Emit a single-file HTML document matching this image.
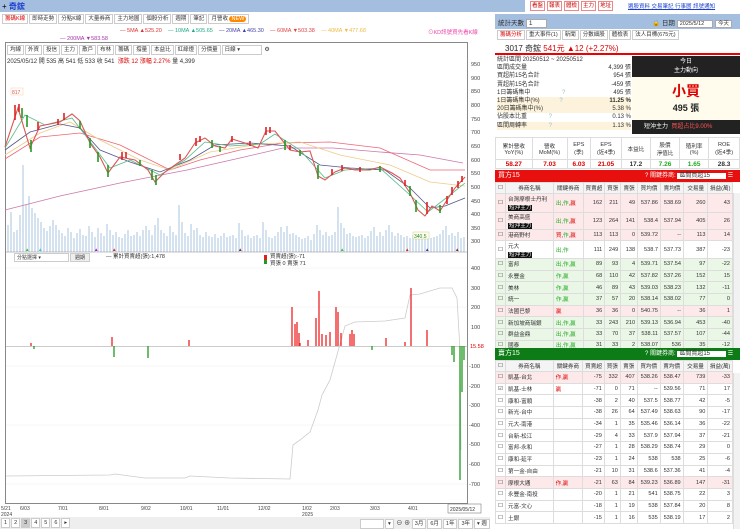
<!DOCTYPE html>
<html><head><meta charset="utf-8">
<style>
*{margin:0;padding:0;box-sizing:border-box}
body{width:740px;height:529px;overflow:hidden;background:#fff;font-family:"Liberation Sans","Noto Sans CJK TC",sans-serif;font-size:6px;color:#333;position:relative}
.a{position:absolute;white-space:nowrap}
.tab{display:inline-block;border:1px solid #ccc;padding:0 2px;height:10px;line-height:9px;margin-right:1px;font-size:5.5px;background:#fff}
.btn{display:inline-block;border:1px solid #e88;color:#c00;padding:0 1px;margin-right:2px;height:10px;line-height:9px;background:#fff;font-size:5.5px}
table{border-collapse:collapse;font-size:5.6px;position:absolute}
td{border:1px solid #ddd;padding:0 2px;text-align:right;white-space:nowrap;overflow:hidden}
td.l{text-align:left}
tr.p td{background:#fde9ea}
tr.g td{background:#eaf7e6}
tr.w td{background:#fff}
th{border:1px solid #ddd;background:#f4f4f4;font-weight:normal;font-size:5.6px;height:11px}
.bk{background:#111;color:#fff;padding:0 1px;font-size:5.6px}
.r{color:#d00}.gr{color:#2a2}
</style></head><body>

<div class="a" style="left:0;top:0;width:525px;height:12px;background:#a4bedf"></div>
<div class="a" style="left:2px;top:1px;font-size:8px;color:#000">+ <span style="color:#1a3fd0;font-weight:bold">奇鋐</span></div>
<div class="a" style="left:530px;top:1px"><span class="btn">看盤</span><span class="btn">報表</span><span class="btn">體檢</span><span class="btn">主力</span><span class="btn">地址</span></div>
<div class="a" style="left:628px;top:2px;color:#1a3fd0;text-decoration:underline;font-size:5.5px">選股資料 交易筆記 行事曆 訊號通知</div>

<div class="a" style="left:2px;top:14px"><span class="tab" style="color:#d00">籌碼K線</span><span class="tab">即時走勢</span><span class="tab">分點K線</span><span class="tab">大量券商</span><span class="tab">主力地圖</span><span class="tab">個股分析</span><span class="tab">週期</span><span class="tab">筆記</span><span class="tab">月營收 <span style="background:#f80;color:#fff;border-radius:4px;padding:0 2px">NEW</span></span></div>

<div class="a" style="left:120px;top:28px;font-size:5.5px"><span style="color:#d33">— 5MA ▲525.20</span>&nbsp;&nbsp;&nbsp;&nbsp;<span style="color:#2a8">— 10MA ▲505.65</span>&nbsp;&nbsp;&nbsp;&nbsp;<span style="color:#44a">— 20MA ▲465.30</span>&nbsp;&nbsp;&nbsp;&nbsp;<span style="color:#d44">— 60MA ▼503.38</span>&nbsp;&nbsp;&nbsp;&nbsp;<span style="color:#eb4">— 40MA ▼477.68</span></div>
<div class="a" style="left:60px;top:36px;font-size:5.5px;color:#a3a">— 200MA ▼583.58</div>
<div class="a" style="left:428px;top:28px;font-size:5.5px;color:#e4a">⊙KD訊號買先看K線</div>

<div class="a" style="left:5px;top:42px;width:463px;height:462px;border:1px solid #888"></div>
<div class="a" style="left:7px;top:45px"><span class="tab">均線</span><span class="tab">外資</span><span class="tab">投信</span><span class="tab">主力</span><span class="tab">散戶</span><span class="tab">布林</span><span class="tab">籌碼</span><span class="tab">撐量</span><span class="tab">本益比</span><span class="tab">紅綠燈</span><span class="tab">分價量</span><span class="tab" style="width:40px">日線 ▾</span> ⚙</div>
<div class="a" style="left:7px;top:56px;font-size:6px">2025/05/12 開 535 高 541 低 533 收 541 &nbsp;<span class="r">漲跌 12 漲幅 2.27%</span> 量 4,399</div>

<svg class="a" style="left:0;top:0" width="490" height="529">
<g font-size="5.5" fill="#444" font-family="Liberation Sans">
<text x="471" y="66">950</text><text x="471" y="80">900</text><text x="471" y="93">850</text><text x="471" y="107">800</text><text x="471" y="121">750</text><text x="471" y="134">700</text><text x="471" y="148">650</text><text x="471" y="162">600</text><text x="471" y="175">550</text><text x="471" y="189">500</text><text x="471" y="203">450</text><text x="471" y="216">400</text><text x="471" y="230">350</text><text x="471" y="243">300</text>
<text x="471" y="270">400</text><text x="471" y="290">300</text><text x="471" y="309">200</text><text x="471" y="329">100</text><text x="470" y="348" fill="#d00">15.58</text><text x="469" y="368">-100</text><text x="469" y="388">-200</text><text x="469" y="407">-300</text><text x="469" y="427">-400</text><text x="469" y="446">-500</text><text x="469" y="466">-600</text><text x="469" y="486">-700</text>
</g>
<g stroke="#b8cde2" stroke-width="1.2">
<path d="M8 252V225M11 252V212M14 252V232M17 252V230M20 252V215M23 252V165M26 252V205M29 252V196M32 252V208M35 252V213M38 252V218M41 252V222M44 252V228M47 252V231M50 252V226M53 252V220M56 252V225M59 252V230M62 252V233M65 252V236M68 252V228M71 252V232M74 252V238M77 252V233M80 252V229M83 252V235M86 252V236M89 252V226M92 252V232M95 252V237M98 252V228M101 252V233M104 252V236M107 252V224M110 252V230M113 252V235M116 252V232M119 252V237M122 252V238M125 252V234M128 252V230M131 252V236M134 252V235M137 252V232M140 252V236M143 252V230M146 252V226M149 252V230M152 252V235M155 252V225M158 252V218M161 252V230M164 252V233M167 252V236M170 252V226M173 252V232M176 252V235M179 252V205M182 252V222M185 252V233M188 252V236M191 252V224M194 252V230M197 252V228M200 252V235M203 252V237M206 252V232M209 252V236M212 252V237M215 252V234M218 252V238M221 252V236M224 252V233M227 252V237M230 252V236M233 252V235M236 252V238M239 252V223M242 252V230M245 252V236M248 252V235M251 252V238M254 252V236M257 252V235M260 252V238M263 252V222M266 252V230M269 252V237M272 252V238M275 252V236M278 252V232M281 252V227M284 252V232M287 252V226M290 252V234M293 252V233M296 252V235M299 252V237M302 252V239M305 252V238M308 252V236M311 252V240M314 252V234M317 252V225M320 252V230M323 252V235M326 252V232M329 252V236M332 252V235M335 252V232M338 252V207M341 252V223M344 252V228M347 252V234M350 252V233M353 252V236M356 252V237M359 252V236M362 252V235M365 252V238M368 252V236M371 252V231M374 252V227M377 252V236M380 252V232M383 252V236M386 252V230M389 252V225M392 252V232M395 252V236M398 252V233M401 252V235M404 252V237M407 252V236M410 252V238M413 252V235M416 252V232M419 252V238M422 252V236M425 252V232M428 252V235M431 252V238M434 252V237M437 252V236M440 252V234M443 252V230M446 252V226M449 252V235M452 252V233M455 252V236M458 252V232M461 252V238M464 252V237"/>
</g>
<g fill="none" stroke-width="0.8">
<polyline stroke="#c7a" points="5,210 60,196 120,183 187,170 240,158 283,148 333,148 380,152 420,155 463,163"/>
<polyline stroke="#e67" points="5,159 40,137 80,133 120,145 170,170 200,160 240,150 283,143 330,142 380,148 430,170 465,170"/>
<polyline stroke="#ec8" points="5,155 40,133 70,122 100,140 140,160 170,170 210,152 260,144 300,142 340,155 390,165 430,182 465,186"/>
<polyline stroke="#558" points="5,150 30,132 60,124 80,128 100,150 130,162 160,172 190,160 215,145 250,143 290,146 320,165 350,168 385,170 410,188 430,208 445,206 465,198"/>
<polyline stroke="#5b8" points="5,148 25,115 45,125 72,118 95,148 110,168 130,160 160,175 185,160 205,142 230,146 260,144 275,134 300,150 325,178 345,170 380,168 410,195 428,212 450,195 465,183"/>
<polyline stroke="#d55" stroke-width="1.1" points="5,147 18,108 30,148 40,126 60,122 72,114 80,121 90,143 100,157 108,173 120,157 135,160 148,170 155,182 165,172 175,165 185,158 195,143 205,138 215,146 225,148 232,139 245,143 258,148 266,131 275,131 282,140 290,150 300,152 310,151 318,176 325,180 335,172 345,168 355,170 370,170 380,167 392,173 400,178 410,193 418,210 425,216 432,206 440,211 447,200 455,188 465,177"/>
</g>
<g stroke-width="1.6">
<path stroke="#d22" d="M15 120v-15M19 112v-8M38 130v-8M58 125v-6M64 120v-7M122 160v-8M126 158v-6M196 146v-8M200 142v-6M232 142v-6M266 135v-8M270 133v-6M332 175v-6M342 171v-6M405 186v-6M427 214v-12M447 204v-8M452 195v-8M458 188v-7M462 182v-6M180 160v-6M250 146v-5M290 150v-5M360 172v-5"/>
<path stroke="#292" d="M22 108v10M27 115v12M31 140v12M90 138v10M98 152v10M108 165v12M152 170v10M156 175v10M212 140v8M285 140v10M318 165v14M410 186v10M416 200v12M440 205v8M80 121v8M140 160v6M220 146v6M300 150v6M380 166v6"/>
</g>
<rect x="11" y="88" width="12" height="7" fill="#fff" stroke="#fc9" stroke-width=".5"/><text x="12" y="94" font-size="5" fill="#d55">817</text>
<rect x="413" y="232" width="16" height="7" fill="#ffe" stroke="#cc9" stroke-width=".5"/><text x="414" y="238" font-size="5" fill="#282">340.5</text>
<line x1="6" y1="252" x2="467" y2="252" stroke="#888" stroke-width=".6"/>
<g font-size="4.5"><text x="25" y="251" fill="#2c2">▲</text><text x="112" y="251" fill="#d22">▲</text><text x="94" y="251" fill="#c0c">▲</text><text x="238" y="251" fill="#822">▲</text><text x="340" y="251" fill="#2c2">▲</text><text x="405" y="251" fill="#d22">▲</text><text x="425" y="251" fill="#33a">▲</text><text x="455" y="251" fill="#822">▲</text><text x="38" y="251" fill="#2cc">▲</text></g>
<g stroke="#eee" stroke-width=".5"><path d="M6 268H467M6 307H467M6 366H467M6 425H467M6 484H467"/></g>
<line x1="6" y1="346.5" x2="467" y2="346.5" stroke="#999" stroke-width=".5"/>
<polyline fill="none" stroke="#ccc" stroke-width=".8" points="6,476 110,475 115,474 145,478 185,478 190,476 230,478 290,479 293,445 300,440 310,432 318,410 322,395 330,380 337,355 345,326 355,322 385,321 405,318 410,295 420,294 440,288 452,288 457,298 460,350 461,450"/>
<g stroke="#e22" stroke-width="1.3"><path d="M31 346V343M112 346V337M189 346V340M292 346V307M295 346V324M297 346V322M299 346V333M300 346V343M308 346V340M316 346V318M319 346V291M322 346V334M326 346V335M330 346V332M336 346V307M338 346V312M341 346V333M350 346V334M352 346V330M354 346V334M386 346V338M405 346V342M411 346V288M427 346V330"/></g>
<g stroke="#292" stroke-width="1.3"><path d="M34 346V349M114 346V357M148 346V358M372 346V350M452 346V355M454 346V362M460 346V480M462 346V392M464 346V360"/></g>
<g font-size="5.5" fill="#333"><text x="106" y="258">— 累計買賣超(張):1,478</text><rect x="264" y="255" width="3" height="5" fill="#d22"/><rect x="264" y="260" width="3" height="4" fill="#292"/><text x="270" y="258">買賣超(張):-71</text><text x="270" y="265">買張 0 賣張 71</text></g>
<g font-size="5" fill="#444"><text x="1" y="510">5/21</text><text x="1" y="516">2024</text><text x="20" y="510">6/03</text><text x="58" y="510">7/01</text><text x="99" y="510">8/01</text><text x="141" y="510">9/02</text><text x="180" y="510">10/01</text><text x="217" y="510">11/01</text><text x="258" y="510">12/02</text><text x="302" y="510">1/02</text><text x="302" y="516">2025</text><text x="330" y="510">2/03</text><text x="370" y="510">3/03</text><text x="408" y="510">4/01</text></g>
<rect x="448" y="504" width="33" height="9" fill="#fff" stroke="#666" stroke-width=".5"/><text x="450" y="511" font-size="5" fill="#333">2025/05/12</text>
</svg>
<div class="a" style="left:14px;top:253px;width:55px;height:9px;border:1px solid #ccc;font-size:5px;padding-left:2px;background:#fff">分點選擇 ▾</div>
<div class="a" style="left:70px;top:253px;width:20px;height:9px;border:1px solid #ccc;background:#eee;font-size:5px;text-align:center">週期</div>

<div class="a" style="left:0;top:517px;width:490px;height:12px;background:#eee"></div>
<div class="a" style="left:1px;top:518px;font-size:6px"><span class="tab">1</span><span class="tab">2</span><span class="tab" style="background:#ccc">3</span><span class="tab">4</span><span class="tab">5</span><span class="tab">6</span><span class="tab">▸</span></div>
<div class="a" style="left:360px;top:518px;font-size:6px"><span class="tab" style="width:24px">&nbsp;</span><span class="tab">▾</span> ⊖ ⊕ <span class="tab">3月</span><span class="tab">6月</span><span class="tab">1年</span><span class="tab">3年</span><span class="tab">▾ 週</span></div>

<div class="a" style="left:495px;top:14px;width:245px;height:15px;background:#a4bedf"></div>
<div class="a" style="left:498px;top:17px;font-size:6.5px">統計天數 <span style="background:#fff;border:1px solid #aaa;padding:0 14px 0 2px">1</span></div>
<div class="a" style="left:652px;top:17px;font-size:6.5px">🔒 日期 <span style="background:#fff;border:1px solid #aaa;padding:0 8px 0 2px;font-size:5.5px">2025/5/12</span> <span style="background:#fff;border:1px solid #aaa;padding:0 2px;font-size:5.5px">今天</span></div>
<div class="a" style="left:497px;top:30px"><span class="tab" style="color:#d00">籌碼分析</span><span class="tab">重大事件(1)</span><span class="tab">新聞</span><span class="tab">分數細股</span><span class="tab">體檢表</span><span class="tab">法人目標(675元)</span></div>
<div class="a" style="left:495px;top:41px;width:245px;height:14px;border-bottom:2px solid #e00"></div>
<div class="a" style="left:505px;top:43px;font-size:8px;color:#222">3017 奇鋐 <span class="r">541元 ▲12 (+2.27%)</span></div>

<div class="a" style="left:497px;top:56px;width:134px;font-size:6px;line-height:8.2px">
<div style="display:flex;justify-content:space-between"><span>統計區間 20250512 ~ 20250512</span></div>
<div style="display:flex;justify-content:space-between"><span>區間成交量</span><span>4,399 張</span></div>
<div style="display:flex;justify-content:space-between"><span>買超前15名合計</span><span>954 張</span></div>
<div style="display:flex;justify-content:space-between"><span>賣超前15名合計</span><span>-459 張</span></div>
<div style="display:flex;justify-content:space-between"><span>1日籌碼集中 <span style="color:#9bc;margin-left:30px">?</span></span><span>495 張</span></div>
<div style="display:flex;justify-content:space-between;background:#fdf3dc"><span>1日籌碼集中(%) <span style="color:#9bc;margin-left:18px">?</span></span><span style="font-weight:bold">11.25 %</span></div>
<div style="display:flex;justify-content:space-between;background:#fdf3dc"><span>20日籌碼集中(%)</span><span>5.38 %</span></div>
<div style="display:flex;justify-content:space-between"><span>佔股本比重 <span style="color:#9bc;margin-left:20px">?</span></span><span>0.13 %</span></div>
<div style="display:flex;justify-content:space-between;background:#fdf3dc"><span>區間周轉率 <span style="color:#9bc;margin-left:20px">?</span></span><span>1.13 %</span></div>
</div>
<div class="a" style="left:632px;top:56px;width:108px;height:21px;background:#222;color:#fff;text-align:center;font-size:6px;line-height:9px;padding-top:2px">今日<br>主力動向</div>
<div class="a" style="left:632px;top:77px;width:108px;height:43px;background:#fffcee;text-align:center"><div style="color:#d00;font-size:14px;margin-top:4px;font-weight:bold">小買</div><div style="font-size:9px;font-weight:bold;color:#222">495 張</div></div>
<div class="a" style="left:632px;top:120px;width:108px;height:14px;background:#222;color:#fff;font-size:6px;line-height:14px;padding-left:12px">短沖主力 &nbsp;<span style="color:#f55">買超占比9.00%</span></div>

<table style="left:495px;top:137px;width:245px;height:32px">
<tr style="height:22px;color:#333"><td style="text-align:center">累計營收<br>YoY(%)</td><td style="text-align:center">營收<br>MoM(%)</td><td style="text-align:center">EPS<br>(季)</td><td style="text-align:center">EPS<br>(近4季)</td><td style="text-align:center">本益比</td><td style="text-align:center">股價<br>淨值比</td><td style="text-align:center">殖利率<br>(%)</td><td style="text-align:center">ROE<br>(近4季)</td></tr>
<tr style="font-weight:bold;font-size:6.5px"><td class="r" style="text-align:center">58.27</td><td class="r" style="text-align:center">7.03</td><td class="r" style="text-align:center">6.03</td><td class="r" style="text-align:center">21.05</td><td style="text-align:center">17.2</td><td class="gr" style="text-align:center">7.26</td><td class="gr" style="text-align:center">1.65</td><td style="text-align:center">28.3</td></tr>
</table>

<div class="a" style="left:495px;top:170px;width:245px;height:12px;background:#e8100e;color:#fff;font-size:7px;line-height:12px;padding-left:3px">買方15<span style="position:absolute;left:150px;font-size:6px">? 關鍵券商: <span style="background:#fff;color:#333;padding:0 16px 0 2px">區間買超15</span> ☰</span></div>
<table style="left:495px;top:182px;width:238px">
<colgroup><col style="width:9px"><col style="width:48px"><col style="width:30px"><col style="width:22px"><col style="width:16px"><col style="width:17px"><col style="width:23px"><col style="width:23px"><col style="width:25px"><col style="width:25px"></colgroup>
<tr><th>☐</th><th>券商名稱</th><th>關鍵券商</th><th>買賣超</th><th>買張</th><th>賣張</th><th>買均價</th><th>賣均價</th><th>交易量</th><th>損益(萬)</th></tr>
<tr class="p" style="height:19px"><td>☐</td><td class="l">台灣摩根士丹利<br><span class="bk">短沖主力</span></td><td class="l"><span class="gr">出</span>,<span class="gr">作</span>,<span class="r">贏</span></td><td>162</td><td>211</td><td>49</td><td>537.86</td><td>538.69</td><td>260</td><td>43</td></tr>
<tr class="p" style="height:17px"><td>☐</td><td class="l">美商高盛<br><span class="bk">短沖主力</span></td><td class="l"><span class="gr">出,作</span>,<span class="r">贏</span></td><td>123</td><td>264</td><td>141</td><td>538.4</td><td>537.94</td><td>405</td><td>26</td></tr>
<tr class="p" style="height:11px"><td>☐</td><td class="l">港商野村</td><td class="l"><span class="r">買</span>,<span class="gr">作</span>,<span class="r">贏</span></td><td>113</td><td>113</td><td>0</td><td>539.72</td><td>--</td><td>113</td><td>14</td></tr>
<tr class="w" style="height:18px"><td>☐</td><td class="l">元大<br><span class="bk">短沖主力</span></td><td class="l gr">出,作</td><td>111</td><td>249</td><td>138</td><td>538.7</td><td>537.73</td><td>387</td><td>-23</td></tr>
<tr class="g" style="height:11.7px"><td>☐</td><td class="l">富邦</td><td class="l gr">出,作,贏</td><td>89</td><td>93</td><td>4</td><td>539.71</td><td>537.54</td><td>97</td><td>-22</td></tr>
<tr class="g" style="height:11.7px"><td>☐</td><td class="l">永豐金</td><td class="l gr">作,贏</td><td>68</td><td>110</td><td>42</td><td>537.82</td><td>537.26</td><td>152</td><td>15</td></tr>
<tr class="g" style="height:11.7px"><td>☐</td><td class="l">美林</td><td class="l gr">作,贏</td><td>46</td><td>89</td><td>43</td><td>539.03</td><td>538.23</td><td>132</td><td>-11</td></tr>
<tr class="g" style="height:11.7px"><td>☐</td><td class="l">統一</td><td class="l gr">作,贏</td><td>37</td><td>57</td><td>20</td><td>538.14</td><td>538.02</td><td>77</td><td>0</td></tr>
<tr class="p" style="height:11.7px"><td>☐</td><td class="l">法國巴黎</td><td class="l r">贏</td><td>36</td><td>36</td><td>0</td><td>540.75</td><td>--</td><td>36</td><td>1</td></tr>
<tr class="g" style="height:11.7px"><td>☐</td><td class="l">新加坡商瑞銀</td><td class="l gr">出,作,贏</td><td>33</td><td>243</td><td>210</td><td>539.13</td><td>536.94</td><td>453</td><td>-40</td></tr>
<tr class="g" style="height:11.7px"><td>☐</td><td class="l">群益金鼎</td><td class="l gr">出,作,贏</td><td>33</td><td>70</td><td>37</td><td>538.11</td><td>537.57</td><td>107</td><td>-44</td></tr>
<tr class="g" style="height:8px"><td>☐</td><td class="l">國泰</td><td class="l gr">出,作,贏</td><td>31</td><td>33</td><td>2</td><td>538.07</td><td>536</td><td>35</td><td>-12</td></tr>
</table>

<div class="a" style="left:495px;top:348px;width:245px;height:12px;background:#0e7c16;color:#fff;font-size:7px;line-height:12px;padding-left:3px">賣方15<span style="position:absolute;left:150px;font-size:6px">? 關鍵券商: <span style="background:#fff;color:#333;padding:0 16px 0 2px">區間賣超15</span> ☰</span></div>
<table style="left:495px;top:360px;width:238px">
<colgroup><col style="width:9px"><col style="width:48px"><col style="width:30px"><col style="width:22px"><col style="width:16px"><col style="width:17px"><col style="width:23px"><col style="width:23px"><col style="width:25px"><col style="width:25px"></colgroup>
<tr><th>☐</th><th>券商名稱</th><th>關鍵券商</th><th>買賣超</th><th>買張</th><th>賣張</th><th>買均價</th><th>賣均價</th><th>交易量</th><th>損益(萬)</th></tr>
<tr class="p" style="height:11.7px"><td>☐</td><td class="l">凱基-台北</td><td class="l r">作,贏</td><td>-75</td><td>332</td><td>407</td><td>538.26</td><td>538.47</td><td>739</td><td>-33</td></tr>
<tr class="w" style="height:11.7px"><td>☑</td><td class="l">凱基-士林</td><td class="l r">贏</td><td>-71</td><td>0</td><td>71</td><td>--</td><td>539.56</td><td>71</td><td>17</td></tr>
<tr class="w" style="height:11.7px"><td>☐</td><td class="l">康和-富順</td><td></td><td>-38</td><td>2</td><td>40</td><td>537.5</td><td>538.77</td><td>42</td><td>-5</td></tr>
<tr class="w" style="height:11.7px"><td>☐</td><td class="l">新光-台中</td><td></td><td>-38</td><td>26</td><td>64</td><td>537.49</td><td>538.63</td><td>90</td><td>-17</td></tr>
<tr class="w" style="height:11.7px"><td>☐</td><td class="l">元大-南港</td><td></td><td>-34</td><td>1</td><td>35</td><td>535.46</td><td>536.14</td><td>36</td><td>-22</td></tr>
<tr class="w" style="height:11.7px"><td>☐</td><td class="l">台新-松江</td><td></td><td>-29</td><td>4</td><td>33</td><td>537.9</td><td>537.94</td><td>37</td><td>-21</td></tr>
<tr class="w" style="height:11.7px"><td>☐</td><td class="l">富邦-永和</td><td></td><td>-27</td><td>1</td><td>28</td><td>538.29</td><td>538.74</td><td>29</td><td>0</td></tr>
<tr class="w" style="height:11.7px"><td>☐</td><td class="l">康和-延平</td><td></td><td>-23</td><td>1</td><td>24</td><td>538</td><td>538</td><td>25</td><td>-6</td></tr>
<tr class="w" style="height:11.7px"><td>☐</td><td class="l">第一金-自由</td><td></td><td>-21</td><td>10</td><td>31</td><td>538.6</td><td>537.36</td><td>41</td><td>-4</td></tr>
<tr class="p" style="height:11.7px"><td>☐</td><td class="l">摩根大通</td><td class="l r">作,贏</td><td>-21</td><td>63</td><td>84</td><td>539.23</td><td>536.89</td><td>147</td><td>-31</td></tr>
<tr class="w" style="height:11.7px"><td>☐</td><td class="l">永豐金-南投</td><td></td><td>-20</td><td>1</td><td>21</td><td>541</td><td>538.75</td><td>22</td><td>3</td></tr>
<tr class="w" style="height:11.7px"><td>☐</td><td class="l">元富-文心</td><td></td><td>-18</td><td>1</td><td>19</td><td>538</td><td>537.84</td><td>20</td><td>8</td></tr>
<tr class="w" style="height:11.7px"><td>☐</td><td class="l">土銀</td><td></td><td>-15</td><td>1</td><td>16</td><td>535</td><td>538.19</td><td>17</td><td>2</td></tr>
</table>
<div class="a" style="left:733px;top:193px;width:7px;height:155px;background:#f2f2f2;border-left:1px solid #ddd"></div>
<div class="a" style="left:733px;top:373px;width:7px;height:156px;background:#f2f2f2;border-left:1px solid #ddd"></div>
</body></html>
